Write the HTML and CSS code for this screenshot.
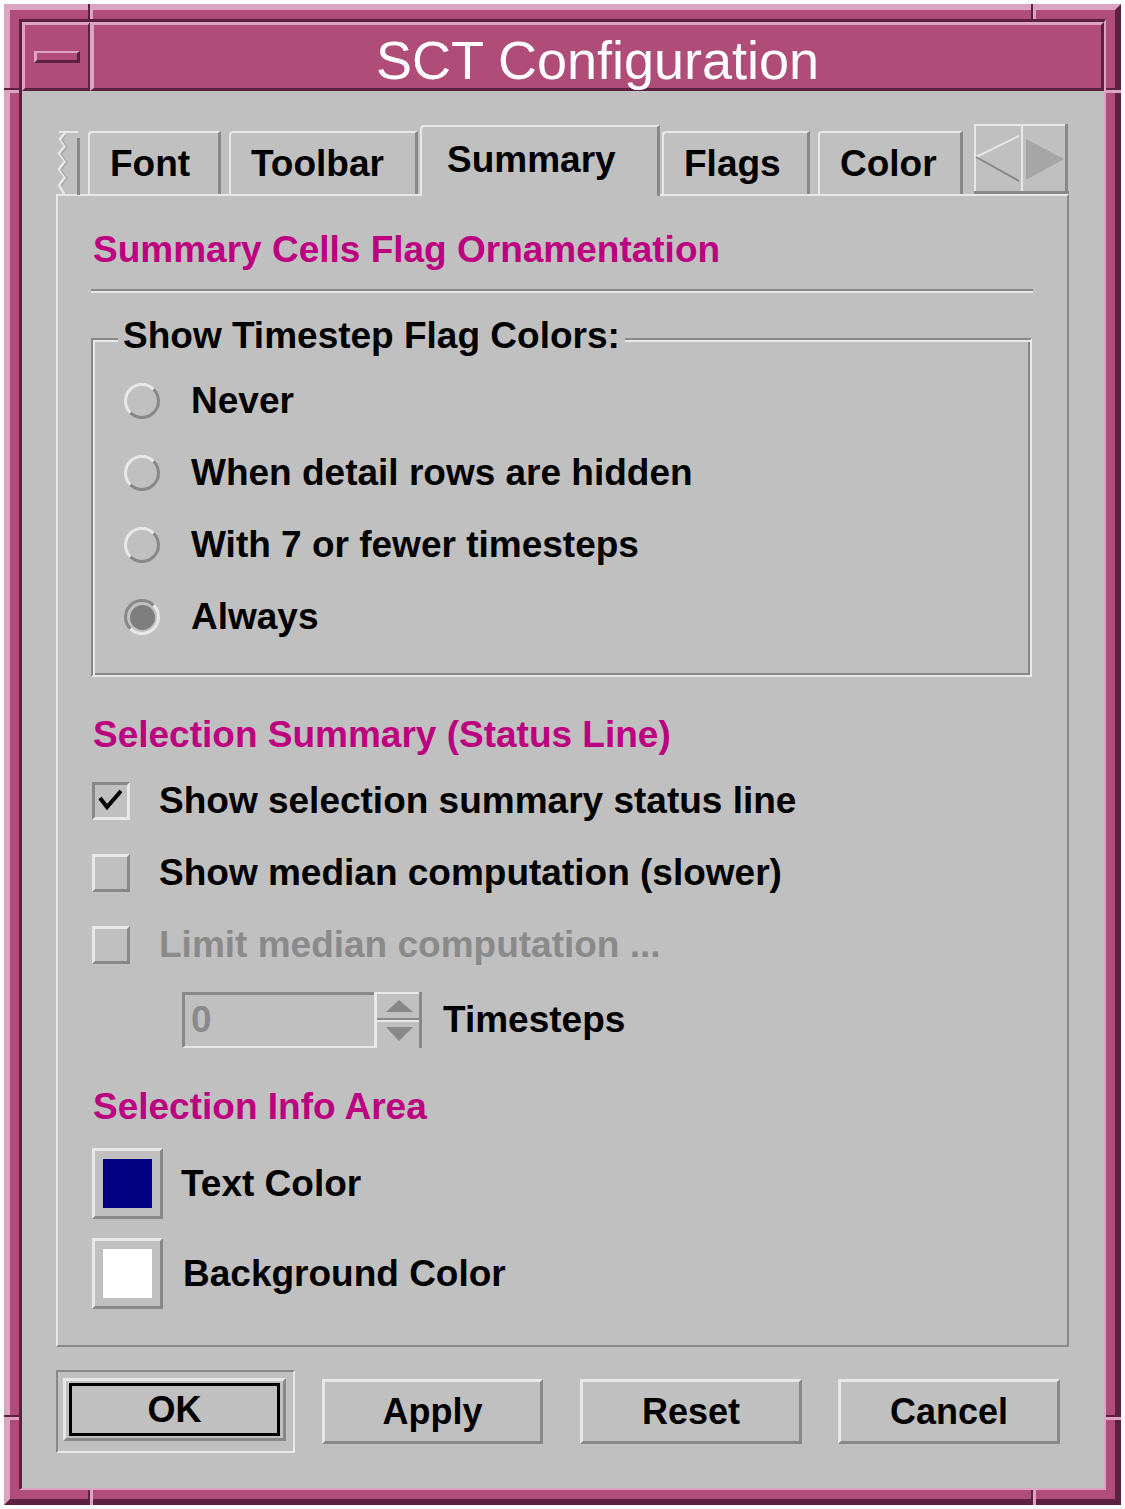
FILE: index.html
```html
<!DOCTYPE html>
<html>
<head>
<meta charset="utf-8">
<link rel="stylesheet" href="styles.css">
</head>
<body>
<div class="window">
  <span class="hv h-t1"></span><span class="hv h-t2"></span>
  <span class="hv h-b1"></span><span class="hv h-b2"></span>
  <span class="hh h-l1"></span><span class="hh h-l2"></span>
  <span class="hh h-r1"></span><span class="hh h-r2"></span>
  <div class="inner">
    <div class="titlebar">
      <div class="menubtn"><span class="menuicon"></span></div>
      <div class="title">SCT Configuration</div>
    </div>
    <div class="content">
      <div class="notebook">
        <div class="tabs">
          <svg class="jag" width="24" height="64" viewBox="0 0 24 64">
            <polyline points="3,1 22,1" stroke="#e8e8e8" stroke-width="2" fill="none"/>
            <polyline points="9,2 4,8 9,15 3,22 9,30 3,38 9,46 3,54 8,63" stroke="#e8e8e8" stroke-width="2.5" fill="none"/>
            <polyline points="10,4 6,9 11,16 5,23 11,31 5,39 11,47 5,55" stroke="#a0a0a0" stroke-width="1.2" fill="none"/>
            <rect x="21" y="7" width="3" height="57" fill="#888"/>
          </svg>
          <div class="tab t-font">Font</div>
          <div class="tab t-toolbar">Toolbar</div>
          <div class="tab sel t-summary">Summary</div>
          <div class="tab t-flags">Flags</div>
          <div class="tab t-color">Color</div>
          <svg class="arrows" width="95" height="70" viewBox="0 0 95 70">
            <rect x="0" y="0" width="95" height="70" fill="#c0c0c0"/>
            <rect x="0" y="0" width="93" height="2" fill="#e8e8e8"/>
            <rect x="0" y="0" width="2" height="70" fill="#e8e8e8"/>
            <rect x="47" y="0" width="2" height="70" fill="#e8e8e8"/>
            <rect x="0" y="67" width="95" height="3" fill="#888"/>
            <rect x="91" y="0" width="3" height="70" fill="#888"/>
            <line x1="2" y1="33" x2="45" y2="12" stroke="#e8e8e8" stroke-width="2"/>
            <line x1="2" y1="33" x2="45" y2="57" stroke="#888" stroke-width="2"/>
            <polygon points="52,15 52,56 90,35" fill="#a6a6a6"/>
          </svg>
        </div>
        <div class="page">
          <div class="heading h-first">Summary Cells Flag Ornamentation</div>
          <div class="sep"></div>
          <div class="group">
            <div class="group-title">Show Timestep Flag Colors:</div>
            <div class="radios">
              <div class="row radio-row"><span class="radio"></span><span class="label">Never</span></div>
              <div class="row radio-row"><span class="radio"></span><span class="label">When detail rows are hidden</span></div>
              <div class="row radio-row"><span class="radio"></span><span class="label">With 7 or fewer timesteps</span></div>
              <div class="row radio-row"><span class="radio on"></span><span class="label">Always</span></div>
            </div>
          </div>
          <div class="heading h-second">Selection Summary (Status Line)</div>
          <div class="checks">
            <div class="row check-row"><span class="cb on"><svg width="32" height="32" viewBox="0 0 32 32"><polyline points="5,13 12,22 26,6" stroke="#000" stroke-width="4" fill="none"/></svg></span><span class="label">Show selection summary status line</span></div>
            <div class="row check-row"><span class="cb"></span><span class="label">Show median computation (slower)</span></div>
            <div class="row check-row"><span class="cb"></span><span class="label disabled">Limit median computation ...</span></div>
          </div>
          <div class="row spin-row">
            <div class="field">0</div>
            <svg class="spin" width="48" height="56" viewBox="0 0 48 56">
              <rect x="0" y="0" width="48" height="56" fill="#c0c0c0"/>
              <rect x="0" y="0" width="46" height="2" fill="#e8e8e8"/>
              <rect x="0" y="0" width="3" height="56" fill="#e8e8e8"/>
              <rect x="45" y="0" width="3" height="56" fill="#888"/>
              <rect x="3" y="26" width="45" height="2" fill="#888"/>
              <rect x="3" y="28" width="42" height="2" fill="#e8e8e8"/>
              <polygon points="12,20 25,8 39,20" fill="#888"/>
              <polygon points="12,35 39,35 25,49" fill="#888"/>
            </svg>
            <span class="label spin-label">Timesteps</span>
          </div>
          <div class="heading h-third">Selection Info Area</div>
          <div class="row color-row first-color"><span class="cbtn"><span class="swatch navy"></span></span><span class="label">Text Color</span></div>
          <div class="row color-row second-color"><span class="cbtn"><span class="swatch white"></span></span><span class="label bg-label">Background Color</span></div>
        </div>
      </div>
      <div class="buttons">
        <div class="ring"><div class="btn ok"><span class="focus">OK</span></div></div>
        <div class="btn b-apply">Apply</div>
        <div class="btn b-reset">Reset</div>
        <div class="btn b-cancel">Cancel</div>
      </div>
    </div>
  </div>
</div>
</body>
</html>
```

FILE: styles.css
```css
* { box-sizing: border-box; }
body { margin: 0; background: #ffffff; font-family: "Liberation Sans", Arial, sans-serif; }

.window {
  position: relative;
  margin: 4px 0 0 4px;
  width: 1117px;
  height: 1501px;
  border: 6px solid;
  border-color: #dca4c2 #5c2040 #5c2040 #dca4c2;
  background: #b04c78;
  padding: 9px;
}
.hv, .hh { position: absolute; background: #dca4c2; }
.hv { width: 5px; height: 15px; border-left: 2px solid #5c2040; }
.hh { width: 15px; height: 5px; border-top: 2px solid #5c2040; }
.h-t1 { left: 78px; top: -6px; }
.h-t2 { left: 1021px; top: -6px; }
.h-b1 { left: 78px; bottom: -6px; }
.h-b2 { left: 1021px; bottom: -6px; }
.h-l1 { left: -6px; top: 78px; }
.h-l2 { left: -6px; top: 1405px; }
.h-r1 { right: -6px; top: 78px; }
.h-r2 { right: -6px; top: 1405px; }

.inner {
  height: 100%;
  border-style: solid;
  border-width: 3px 2px 2px 3px;
  border-color: #5c2040 #dca4c2 #dca4c2 #5c2040;
  background: #c0c0c0;
  display: flex;
  flex-direction: column;
}
.titlebar { height: 69px; display: flex; background: #b04c78; flex: none; }
.menubtn {
  width: 68px;
  border-style: solid;
  border-width: 3px 2px 3px 3px;
  border-color: #dca4c2 #5c2040 #5c2040 #dca4c2;
  display: flex; align-items: center; justify-content: center;
}
.menuicon {
  width: 46px; height: 12px;
  border-style: solid;
  border-width: 2px 3px 3px 3px;
  border-color: #dca4c2 #5c2040 #5c2040 #dca4c2;
}
.title {
  flex: 1;
  border-style: solid;
  border-width: 3px 3px 3px 4px;
  border-color: #dca4c2 #5c2040 #5c2040 #dca4c2;
  color: #ffffff;
  font-size: 54px;
  display: flex; align-items: center; justify-content: center;
  padding-top: 6px;
}

.content { flex: 1; padding: 34px 35px 35px 34px; display: flex; flex-direction: column; }

.tabs { display: flex; align-items: flex-end; height: 69px; position: relative; z-index: 1; }
.jag { flex: none; display: block; margin-bottom: -1px; }
.tab {
  height: 63px;
  border-style: solid;
  border-width: 2px 3px 0 2px;
  border-color: #e8e8e8 #888888 #888888 #e8e8e8;
  border-top-left-radius: 4px;
  display: flex; align-items: center;
  font-size: 37px; font-weight: bold; color: #000;
  padding-left: 20px;
  flex: none;
}
.tab.sel { height: 71px; margin-bottom: -2px; background: #c0c0c0; padding-left: 25px; padding-bottom: 4px; }
.t-font { margin-left: 8px; width: 133px; }
.t-toolbar { margin-left: 8px; width: 189px; }
.t-summary { margin-left: 2px; width: 240px; }
.t-flags { margin-left: 2px; width: 148px; }
.t-color { margin-left: 8px; width: 145px; }
.arrows { margin-left: 11px; flex: none; display: block; margin-bottom: 0; }

.page {
  border: 2px solid;
  border-color: #e8e8e8 #888888 #888888 #e8e8e8;
  padding: 0 34px 36px 33px;
}
.heading {
  height: 40px; line-height: 40px;
  font-size: 37px; font-weight: bold;
  color: #bd007f;
  padding-left: 2px;
  white-space: nowrap;
}
.h-first { margin-top: 34px; }
.h-second { margin-top: 38px; }
.h-third { margin-top: 39px; }
.sep { height: 4px; border-top: 2px solid #888; border-bottom: 2px solid #e8e8e8; margin-top: 19px; }

.group {
  margin-top: 45px;
  margin-right: 1px;
  border: 2px solid;
  border-color: #888 #e8e8e8 #e8e8e8 #888;
  box-shadow: inset 2px 2px 0 #e8e8e8, inset -2px -2px 0 #888;
  padding: 0 0 22px 31px;
}
.group-title {
  width: fit-content;
  margin: -24px 0 0 -6px;
  padding: 0 5px;
  background: #c0c0c0;
  height: 40px; line-height: 40px;
  font-size: 37px; font-weight: bold; color: #000;
  white-space: nowrap;
}
.radios { margin-top: 9px; }
.row { display: flex; align-items: center; }
.radio-row { height: 72px; }
.label { font-size: 37px; font-weight: bold; line-height: 40px; color: #000; white-space: nowrap; }
.label.disabled { color: #8a8a8a; }
.radio {
  flex: none;
  width: 36px; height: 36px;
  border-radius: 50%;
  border: 3px solid;
  border-color: #e8e8e8 #888 #888 #e8e8e8;
  margin-right: 31px;
}
.radio.on {
  border-color: #888 #e8e8e8 #e8e8e8 #888;
  display: flex; align-items: center; justify-content: center;
}
.radio.on::after {
  content: "";
  width: 25px; height: 25px;
  border-radius: 50%;
  background: #7e7e7e;
}

.checks { margin-top: 10px; }
.check-row { height: 72px; }
.cb {
  flex: none;
  width: 38px; height: 38px;
  border: 3px solid;
  border-color: #e8e8e8 #888 #888 #e8e8e8;
  margin-left: 1px; margin-right: 29px;
}
.cb.on { border-color: #888 #e8e8e8 #e8e8e8 #888; }
.cb svg { display: block; }

.spin-row { height: 56px; margin-top: 11px; padding-left: 91px; }
.field {
  width: 192px; height: 56px;
  border-style: solid;
  border-width: 3px 0 2px 3px;
  border-color: #888 #888 #e8e8e8 #888;
  font-size: 37px; font-weight: bold; color: #8a8a8a;
  line-height: 50px;
  padding-left: 6px;
}
.spin { display: block; flex: none; }
.spin-label { margin-left: 21px; }

.color-row { height: 71px; }
.first-color { margin-top: 21px; }
.second-color { margin-top: 19px; }
.cbtn {
  flex: none;
  width: 71px; height: 71px;
  border: 3px solid;
  border-color: #e8e8e8 #888 #888 #e8e8e8;
  margin-left: 1px; margin-right: 18px;
  display: flex; align-items: center; justify-content: center;
}
.swatch { width: 49px; height: 49px; }
.navy { background: #000080; }
.white { background: #ffffff; }
.bg-label { margin-left: 2px; }

.buttons { margin-top: 23px; display: flex; align-items: center; }
.ring {
  width: 239px; height: 83px;
  border: 2px solid;
  border-color: #888 #e8e8e8 #e8e8e8 #888;
  padding: 6px 0 0 5px;
}
.btn {
  flex: none;
  width: 221px; height: 65px;
  border: 3px solid;
  border-color: #e8e8e8 #888 #888 #e8e8e8;
  font-size: 36px; font-weight: bold; color: #000;
  display: flex; align-items: center; justify-content: center;
}
.btn.ok { width: 223px; height: 63px; padding: 2px 3px; }
.focus {
  flex: 1; align-self: stretch;
  border: 3px solid #000;
  display: flex; align-items: center; justify-content: center;
}
.b-apply { margin-left: 27px; }
.b-reset { margin-left: 37px; width: 222px; }
.b-cancel { margin-left: 36px; width: 222px; }
```
